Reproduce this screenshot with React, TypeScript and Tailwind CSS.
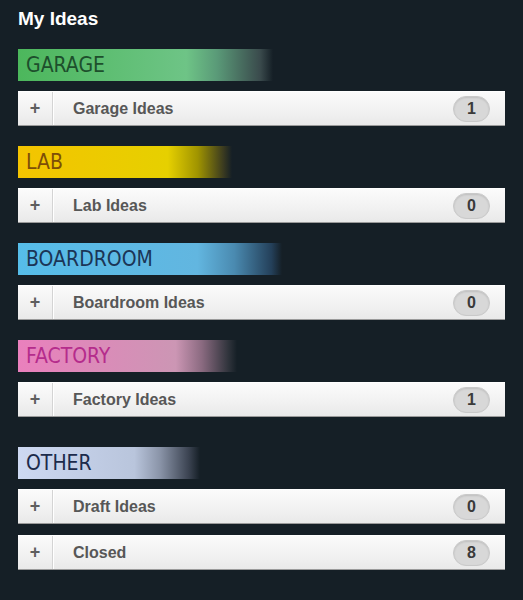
const sections = [
  {
    label: "GARAGE",
    bar: "w-[255px] bg-[linear-gradient(90deg,#4cb75c_0%,#6ec486_66%,#5a9a78_78%,#3a4a4c_95%,rgba(21,31,38,0)_100%)] text-[#1d4f2c]",
    rows: [{ name: "Garage Ideas", count: 1 }],
  },
  {
    label: "LAB",
    bar: "w-[214px] bg-[linear-gradient(90deg,#f4c400_0%,#e6d000_70%,#a09400_84%,#3a3a20_96%,rgba(21,31,38,0)_100%)] text-[#7d4e08]",
    rows: [{ name: "Lab Ideas", count: 0 }],
  },
  {
    label: "BOARDROOM",
    bar: "w-[264px] bg-[linear-gradient(90deg,#56bde9_0%,#62b6e0_68%,#4a8ab0_82%,#24405a_96%,rgba(21,31,38,0)_100%)] text-[#1b3556]",
    rows: [{ name: "Boardroom Ideas", count: 0 }],
  },
  {
    label: "FACTORY",
    bar: "w-[219px] bg-[linear-gradient(90deg,#ea80bd_0%,#cc96b4_72%,#8a6a80_84%,#30343c_96%,rgba(21,31,38,0)_100%)] text-[#b52c8c]",
    rows: [{ name: "Factory Ideas", count: 1 }],
  },
];

const other = {
  label: "OTHER",
  bar: "w-[182px] bg-[linear-gradient(90deg,#cdd9f2_0%,#b9c5dc_64%,#8a94a8_78%,#3a4250_94%,rgba(21,31,38,0)_100%)] text-[#1c2b4b]",
  rows: [
    { name: "Draft Ideas", count: 0 },
    { name: "Closed", count: 8 },
  ],
};

function Bar({ label, bar }: { label: string; bar: string }) {
  return (
    <div
      className={`h-[32px] flex items-center pl-[8px] text-[21px] leading-none ${bar}`}
      style={{ fontFamily: '"DejaVu Sans Condensed", "DejaVu Sans", sans-serif' }}
    >
      {label}
    </div>
  );
}

function Row({ name, count }: { name: string; count: number }) {
  return (
    <div className="h-[35px] flex items-stretch bg-[linear-gradient(180deg,#fbfbfb_0%,#f1f1f1_60%,#e9e9e9_100%)] border-b border-[#9a9a9a] border-t border-t-[#ffffff]">
      <div className="w-[35px] flex items-center justify-center border-r border-[#d4d4d4] text-[#5f5f5f] text-[18px] font-bold">
        +
      </div>
      <div className="flex-1 flex items-center pl-[19px] border-l border-white text-[16px] font-bold text-[#575757]">
        {name}
      </div>
      <div className="flex items-center pr-[15px]">
        <span className="w-[37px] h-[26px] rounded-full bg-[#d8d8d8] border border-[#c9c9c9] shadow-[inset_0_1px_2px_rgba(0,0,0,0.12)] flex items-center justify-center text-[16px] font-bold text-[#3a3a3a]">
          {count}
        </span>
      </div>
    </div>
  );
}

export default function App() {
  return (
    <div
      className="w-[523px] h-[600px] bg-[#151f26] pl-[18px] pr-[18px] pt-[8px]"
      style={{ fontFamily: '"Liberation Sans", Arial, sans-serif' }}
    >
      <h1 className="text-[19px] font-bold text-white leading-[22px]">My Ideas</h1>
      <div className="mt-[19px] flex flex-col gap-[20px]">
        {sections.map((s) => (
          <div key={s.label} className="flex flex-col gap-[10px]">
            <Bar label={s.label} bar={s.bar} />
            {s.rows.map((r) => (
              <Row key={r.name} {...r} />
            ))}
          </div>
        ))}
      </div>
      <div className="mt-[30px] flex flex-col gap-[10px]">
        <Bar label={other.label} bar={other.bar} />
        <div className="flex flex-col gap-[11px]">
          {other.rows.map((r) => (
            <Row key={r.name} {...r} />
          ))}
        </div>
      </div>
    </div>
  );
}
